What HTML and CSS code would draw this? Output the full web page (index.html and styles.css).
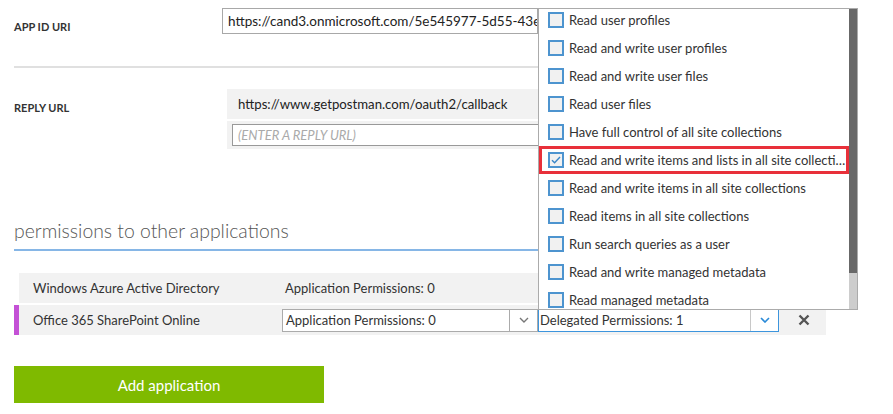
FILE: index.html
```html
<!DOCTYPE html>
<html>
<head>
<meta charset="utf-8">
<link rel="stylesheet" href="styles.css">
</head>
<body>
<div class="page">
  <div class="field field-uri">
    <div class="label">APP ID URI</div>
    <div class="input uri-input">https://cand3.onmicrosoft.com/5e545977-5d55-43eb-b2a1-7c3f</div>
  </div>
  <div class="sep"></div>
  <div class="field field-reply">
    <div class="label">REPLY URL</div>
    <div class="reply-box">
      <div class="reply-value">https://www.getpostman.com/oauth2/callback</div>
      <div class="reply-new"><div class="input placeholder">(ENTER A REPLY URL)</div></div>
    </div>
  </div>
  <h2 class="section-title">permissions to other applications</h2>
  <div class="perm-table">
    <div class="perm-row">
      <div class="cell name">Windows Azure Active Directory</div>
      <div class="cell perms">Application Permissions: 0</div>
      <div class="cell"></div>
      <div class="cell"></div>
    </div>
    <div class="perm-row active">
      <div class="cell name">Office 365 SharePoint Online</div>
      <div class="cell">
        <div class="select">
          <span class="select-text">Application Permissions: 0</span>
          <span class="select-arrow"><svg width="10" height="6" viewBox="0 0 10 6"><path d="M1 1l4 4 4-4" fill="none" stroke="#777" stroke-width="1.4"/></svg></span>
        </div>
      </div>
      <div class="cell">
        <div class="select select-open">
          <span class="select-text">Delegated Permissions: 1</span>
          <span class="select-arrow"><svg width="10" height="6" viewBox="0 0 10 6"><path d="M1 1l4 4 4-4" fill="none" stroke="#2a8ad8" stroke-width="1.6"/></svg></span>
        </div>
      </div>
      <div class="cell remove"><svg width="12" height="12" viewBox="0 0 12 12"><path d="M1.5 1.5l9 9M10.5 1.5l-9 9" stroke="#555" stroke-width="2.4"/></svg></div>
    </div>
  </div>
  <button class="add-btn">Add application</button>

  <div class="dropdown">
    <div class="dd-list">
      <div class="dd-item"><span class="cb"></span><span class="dd-text">Read user profiles</span></div>
      <div class="dd-item"><span class="cb"></span><span class="dd-text">Read and write user profiles</span></div>
      <div class="dd-item"><span class="cb"></span><span class="dd-text">Read and write user files</span></div>
      <div class="dd-item"><span class="cb"></span><span class="dd-text">Read user files</span></div>
      <div class="dd-item"><span class="cb"></span><span class="dd-text">Have full control of all site collections</span></div>
      <div class="dd-item selected"><span class="cb checked"><svg width="12" height="12" viewBox="0 0 12 12"><path d="M2 6.2l2.6 2.6L10 3" fill="none" stroke="#3a86c8" stroke-width="1.4"/></svg></span><span class="dd-text">Read and write items and lists in all site collections</span></div>
      <div class="dd-item"><span class="cb"></span><span class="dd-text">Read and write items in all site collections</span></div>
      <div class="dd-item"><span class="cb"></span><span class="dd-text">Read items in all site collections</span></div>
      <div class="dd-item"><span class="cb"></span><span class="dd-text">Run search queries as a user</span></div>
      <div class="dd-item"><span class="cb"></span><span class="dd-text">Read and write managed metadata</span></div>
      <div class="dd-item"><span class="cb"></span><span class="dd-text">Read managed metadata</span></div>
    </div>
    <div class="dd-scroll"><div class="dd-thumb"></div></div>
  </div>
</div>
</body>
</html>
```

FILE: styles.css
```css
* { box-sizing: border-box; }
html, body { margin: 0; padding: 0; background: #fff; }
body {
  font-family: Lato, "Noto Sans", sans-serif;
  color: #333;
  font-size: 13px;
  overflow: hidden;
}
.page {
  position: relative;
  width: 893px;
  height: 414px;
  padding: 8px 0 0 14px;
}
.field { display: flex; align-items: flex-start; }
.label {
  font-size: 11px;
  font-weight: 700;
  color: #333;
}
.field-uri .label { width: 208px; padding-top: 12px; }
.input {
  border: 1px solid #a8a8a8;
  background: #fff;
  white-space: nowrap;
  overflow: hidden;
}
.uri-input {
  width: 316px;
  height: 26px;
  line-height: 24px;
  padding-left: 5px;
  font-size: 13.5px;
  color: #222;
}
.sep {
  width: 540px;
  height: 2px;
  background: #e0e0e0;
  margin-top: 32px;
}
.field-reply { margin-top: 21px; }
.field-reply .label { width: 213px; padding-top: 12px; }
.reply-box { width: 330px; display: flex; flex-direction: column; gap: 2px; }
.reply-value {
  height: 30px;
  background: #f2f2f2;
  padding-left: 11px;
  line-height: 30px;
  font-size: 13.2px;
  color: #222;
  white-space: nowrap;
}
.reply-new {
  background: #f2f2f2;
  padding: 3px 0 3px 5px;
}
.placeholder {
  height: 22px;
  line-height: 20px;
  padding-left: 5px;
  font-style: italic;
  color: #aaa;
  font-size: 13px;
  border-color: #999;
}
.section-title {
  margin: 69px 0 0 0;
  width: 540px;
  font-size: 19.4px;
  font-weight: 300;
  color: #555;
  line-height: 26px;
  padding-bottom: 5px;
  border-bottom: 2px solid #86b6e6;
}
.perm-table {
  margin-top: 22px;
  width: 812px;
  display: flex;
  flex-direction: column;
  gap: 2px;
}
.perm-row {
  display: grid;
  grid-template-columns: 249px 256px 241px 1fr;
  align-items: center;
  height: 30px;
  margin-left: 5px;
  padding-left: 14px;
  background: #f2f2f2;
}
.perm-row.active {
  margin-left: 0;
  padding-left: 14px;
  border-left: 5px solid #c451d6;
}
.cell { white-space: nowrap; }
.perms { padding-left: 3px; }
.select {
  display: flex;
  height: 23px;
  border: 1px solid #ababab;
  background: #fff;
}
.select-text {
  flex: 1;
  line-height: 21px;
  padding-left: 3px;
  color: #333;
}
.select-arrow {
  width: 28px;
  border-left: 1px solid #ababab;
  display: flex;
  align-items: center;
  justify-content: center;
}
.select-open { border-color: #3d95dd; }
.select-open .select-text { padding-left: 1px; }
.select-open .select-arrow { border-left-color: #c8c8c8; }
.remove { display: flex; justify-content: center; padding-left: 3px; }
.add-btn {
  display: block;
  margin-top: 31px;
  width: 310px;
  height: 37px;
  border: 0;
  background: #7fba00;
  color: #fff;
  font-family: inherit;
  font-size: 15px;
  padding: 0;
}
.dropdown {
  position: absolute;
  left: 538px;
  top: 8px;
  width: 320px;
  height: 302px;
  border: 1px solid #ababab;
  background: #fff;
  display: flex;
  overflow: hidden;
}
.dd-list {
  flex: 1;
  min-width: 0;
  margin-top: -3px;
}
.dd-item {
  height: 28px;
  display: flex;
  align-items: center;
  padding-left: 9px;
  white-space: nowrap;
  color: #333;
  font-size: 13px;
}
.dd-item.selected {
  outline: 3px solid #e8303a;
  outline-offset: -3px;
  padding-right: 3px;
}
.cb {
  flex: none;
  width: 16px;
  height: 16px;
  border: 2px solid #4d94cf;
  background: #f1f1f1;
  margin-right: 5px;
  display: flex;
  align-items: center;
  justify-content: center;
}
.dd-text { min-width: 0; overflow: hidden; text-overflow: ellipsis; }
.dd-scroll {
  flex: none;
  width: 8px;
  background: #cdcdcd;
}
.dd-thumb {
  height: 264px;
  background: #686868;
}
```
